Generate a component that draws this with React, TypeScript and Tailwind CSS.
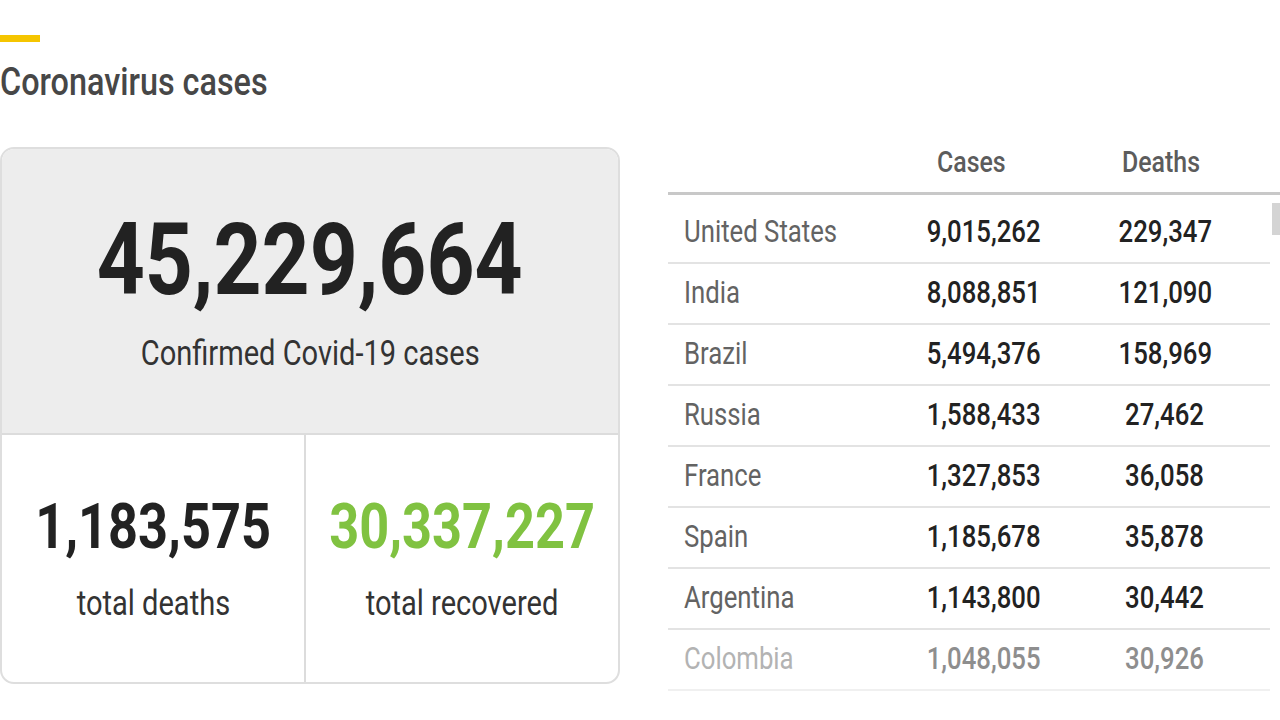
import React from "react";

type Row = { country: string; cases: string; deaths: string };

const rows: Row[] = [
  { country: "United States", cases: "9,015,262", deaths: "229,347" },
  { country: "India", cases: "8,088,851", deaths: "121,090" },
  { country: "Brazil", cases: "5,494,376", deaths: "158,969" },
  { country: "Russia", cases: "1,588,433", deaths: "27,462" },
  { country: "France", cases: "1,327,853", deaths: "36,058" },
  { country: "Spain", cases: "1,185,678", deaths: "35,878" },
  { country: "Argentina", cases: "1,143,800", deaths: "30,442" },
  { country: "Colombia", cases: "1,048,055", deaths: "30,926" },
];

// the source font is condensed, so squeeze Roboto horizontally
function Narrow({ children, left }: { children: React.ReactNode; left?: boolean }) {
  return (
    <span className={`inline-block whitespace-nowrap scale-x-[0.83] ${left ? "origin-left" : "origin-center"}`}>
      {children}
    </span>
  );
}

export default function App() {
  return (
    <div className="w-[1280px] h-[720px] bg-white overflow-hidden font-['Roboto',sans-serif]">
      <div className="pt-[35px]">
        <div className="w-[40px] h-[7px] bg-[#f5c500]" />
        <h1 className="mt-[18px] text-[39px] leading-[44px] font-medium text-[#474747]">
          <Narrow left>Coronavirus cases</Narrow>
        </h1>
      </div>

      <div className="flex mt-[43px]">
        {/* summary card */}
        <div className="w-[620px] shrink-0 h-[537px] border-2 border-[#dedede] rounded-[14px] overflow-hidden flex flex-col">
          <div className="h-[286px] shrink-0 bg-[#ededed] border-b-2 border-[#dcdcdc] flex flex-col items-center pt-[57px]">
            <div className="text-[101px] leading-[108px] font-bold text-[#222]">
              <Narrow>45,229,664</Narrow>
            </div>
            <div className="mt-[20px] text-[35px] leading-[40px] text-[#333]">
              <Narrow>Confirmed Covid-19 cases</Narrow>
            </div>
          </div>
          <div className="flex-1 flex min-w-0">
            <div className="w-[304px] shrink-0 border-r-2 border-[#dcdcdc] flex flex-col items-center pt-[57px]">
              <div className="text-[63px] leading-[70px] font-bold text-[#222]">
                <Narrow>1,183,575</Narrow>
              </div>
              <div className="mt-[22px] text-[35px] leading-[40px] text-[#333]">
                <Narrow>total deaths</Narrow>
              </div>
            </div>
            <div className="flex-1 min-w-0 flex flex-col items-center pt-[57px]">
              <div className="text-[63px] leading-[70px] font-bold text-[#80c241]">
                <Narrow>30,337,227</Narrow>
              </div>
              <div className="mt-[22px] text-[35px] leading-[40px] text-[#333]">
                <Narrow>total recovered</Narrow>
              </div>
            </div>
          </div>
        </div>

        {/* country table */}
        <div className="ml-[48px] flex-1 -mt-[14px]">
          <div className="h-[62px] border-b-[3px] border-[#c8c8c8] flex items-center pb-[3px] text-[30px] font-medium text-[#5c5c5c]">
            <div className="w-[222px]" />
            <div className="w-[162px] text-center">
              <Narrow>Cases</Narrow>
            </div>
            <div className="w-[218px] text-center">
              <Narrow>Deaths</Narrow>
            </div>
          </div>
          <div className="flex mt-[8px]">
            <div className="w-[602px]">
              {rows.map((r, i) => {
                const faded = i === rows.length - 1;
                return (
                  <div
                    key={r.country}
                    className={`h-[61px] flex items-center border-b-2 ${faded ? "border-[#f0f0f0]" : "border-[#e3e3e3]"} text-[31px]`}
                  >
                    <div className={`w-[222px] pl-[16px] ${faded ? "text-[#b3b3b3]" : "text-[#636363]"}`}>
                      <Narrow left>{r.country}</Narrow>
                    </div>
                    <div className={`w-[188px] text-center font-medium ${faded ? "text-[#8e8e8e]" : "text-[#222]"}`}>
                      <Narrow>{r.cases}</Narrow>
                    </div>
                    <div className={`w-[174px] text-center font-medium ${faded ? "text-[#8e8e8e]" : "text-[#222]"}`}>
                      <Narrow>{r.deaths}</Narrow>
                    </div>
                  </div>
                );
              })}
            </div>
            <div className="ml-[2px] w-[8px]">
              <div className="h-[32px] bg-[#d4d4d4]" />
            </div>
          </div>
        </div>
      </div>
    </div>
  );
}
